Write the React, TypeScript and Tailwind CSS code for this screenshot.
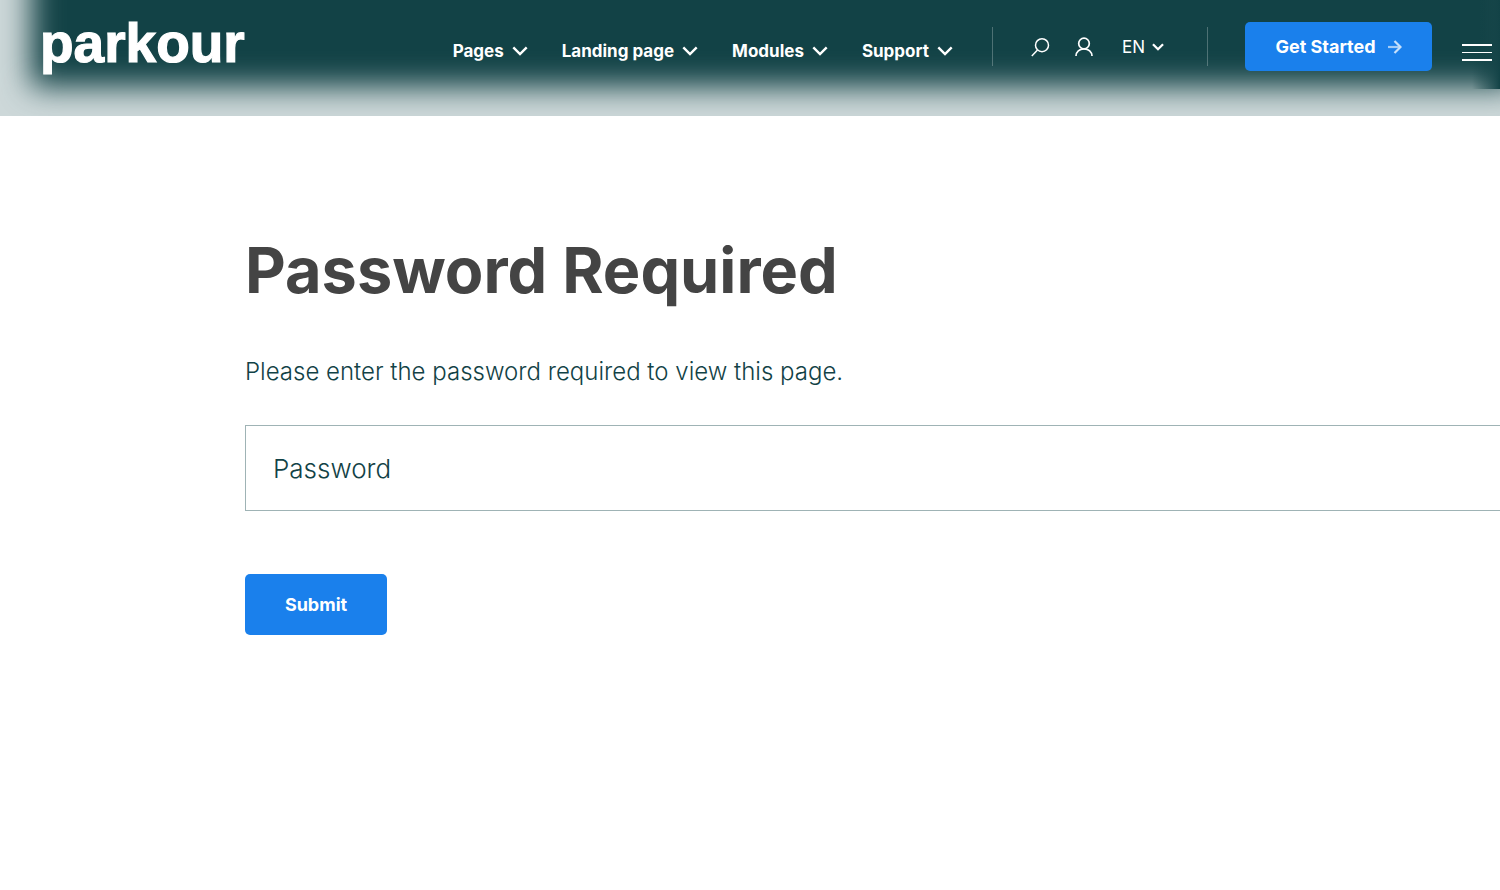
import { useState } from "react";

const menu = ["Pages", "Landing page", "Modules", "Support"];

function Chevron({ size = "large" }: { size?: "large" | "small" }) {
  return (
    <svg
      viewBox="0 0 16 10"
      className={size === "large" ? "h-[10px] w-4" : "h-2 w-3"}
      fill="none"
      stroke="currentColor"
      strokeWidth={size === "large" ? "2.4" : "3"}
      aria-hidden="true"
    >
      <path d="M1.3 1.3 8 8l6.7-6.7" />
    </svg>
  );
}

function Header() {
  return (
    <header className="relative flex h-[116px] items-start overflow-hidden bg-[#cdd8d9] pr-2 pl-[42px] text-white">
      <div className="absolute -top-20 -right-4 left-[31px] h-[167px] bg-[#124246] blur-[15px]" />
      <div className="absolute top-0 right-0 h-[89px] w-7 bg-linear-to-r from-transparent to-[#124246]" />
      <a href="#" aria-label="parkour" className="relative pt-[14px]">
        <svg viewBox="0 0 206 68" className="h-[68px] w-[206px] overflow-visible" aria-hidden="true">
          <text
            x="-2"
            y="47.500"
            fill="white"
            stroke="white"
            strokeWidth="1.2"
            fontSize="55"
            fontWeight="700"
            fontFamily="Liberation Sans, Arial, sans-serif"
          >
            parkour
          </text>
        </svg>
      </a>
      <nav className="relative ml-auto flex gap-[34px] pt-[38px]">
        {menu.map((item) => (
          <button
            key={item}
            type="button"
            className="flex items-center gap-2 text-[17px] leading-[26px] font-bold whitespace-nowrap"
          >
            {item}
            <Chevron />
          </button>
        ))}
      </nav>
      <div className="relative mt-[27px] ml-[39px] flex h-[39px] items-center gap-[25px] border-x border-white/25 pr-[43px] pl-[37px]">
        <button type="button" aria-label="Search">
          <svg viewBox="0 0 20 20" className="size-5" fill="none" stroke="currentColor" strokeWidth="1.5">
            <circle cx="12" cy="8.2" r="6.5" />
            <path d="M7.5 13 1.8 19" />
          </svg>
        </button>
        <button type="button" aria-label="Account">
          <svg viewBox="0 0 18 20" className="h-5 w-[18px]" fill="none" stroke="currentColor" strokeWidth="1.7">
            <circle cx="9" cy="6.5" r="5.3" />
            <path d="M1 19c0-4.3 3.500-7.200 8-7.200s8 2.900 8 7.200" />
          </svg>
        </button>
        <button type="button" className="ml-1 flex items-center gap-[7px] text-[17px] leading-[26px]">
          EN
          <Chevron size="small" />
        </button>
      </div>
      <a
        href="#"
        className="relative mt-[22px] ml-[37px] flex h-[49px] w-[187px] items-center justify-center gap-3 rounded-[5px] bg-[#1a80ec] text-[18px] font-bold whitespace-nowrap"
      >
        Get Started
        <svg viewBox="0 0 14 14" className="size-[14px]" fill="none" strokeWidth="2.2" aria-hidden="true">
          <path d="M0 7h12" stroke="#a3ccf7" />
          <path d="m6.500 1 6 6-6 6" stroke="#c6e0fb" />
        </svg>
      </a>
      <button type="button" aria-label="Open menu" className="relative mt-11 ml-[30px] flex w-[30px] flex-col gap-[6px]">
        <span className="h-[2px] w-full bg-white" />
        <span className="h-px w-full bg-white" />
        <span className="h-[2px] w-full bg-white" />
      </button>
    </header>
  );
}

export default function App() {
  const [password, setPassword] = useState("");
  return (
    <div className="min-h-screen overflow-x-hidden bg-white font-['Inter','Open_Sans',sans-serif] text-[#124246]">
      <Header />
      <main className="pt-[117px] pl-[245px]">
        <h1 className="text-[63px] leading-[74px] font-bold text-[#444444]">Password Required</h1>
        <form onSubmit={(e) => e.preventDefault()}>
          <label htmlFor="password" className="mt-12 block text-[24px] leading-[34px] font-light">
            Please enter the password required to view this page.
          </label>
          <input
            id="password"
            type="password"
            placeholder="Password"
            value={password}
            onChange={(e) => setPassword(e.target.value)}
            className="mt-9 block h-[86px] w-[calc(100%+4px)] border border-[#9fb3b5] bg-white px-[27px] text-[26px] font-light outline-none placeholder:text-[#124246]"
          />
          <button
            type="submit"
            className="mt-[63px] h-[61px] w-[142px] rounded-[5px] bg-[#1a80ec] text-[18px] font-bold text-white"
          >
            Submit
          </button>
        </form>
      </main>
    </div>
  );
}
